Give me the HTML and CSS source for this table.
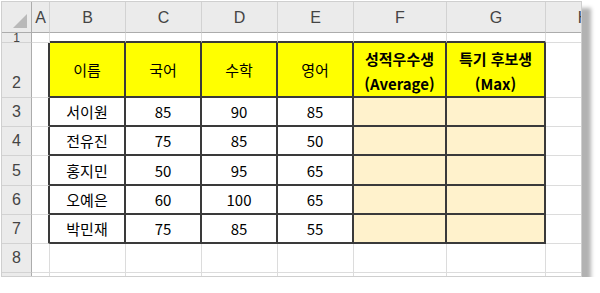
FILE: index.html
```html
<!DOCTYPE html>
<html lang="ko">
<head>
<meta charset="utf-8">
<title>Sheet</title>
<link rel="stylesheet" href="styles.css">
</head>
<body>
<div class="frame">
  <div class="sheet">
    <div class="c corner"><span class="tri"></span></div>
    <div class="c ch">A</div>
    <div class="c ch">B</div>
    <div class="c ch">C</div>
    <div class="c ch">D</div>
    <div class="c ch">E</div>
    <div class="c ch">F</div>
    <div class="c ch">G</div>
    <div class="c ch">H</div>

    <div class="c rh r1">1</div>
    <div class="c"></div>
    <div class="c tt"></div><div class="c tt"></div><div class="c tt"></div><div class="c tt"></div><div class="c tt"></div><div class="c tt"></div>
    <div class="c"></div>

    <div class="c rh">2</div>
    <div class="c tl"></div>
    <div class="c t y">이름</div>
    <div class="c t y">국어</div>
    <div class="c t y">수학</div>
    <div class="c t y">영어</div>
    <div class="c t y b">성적우수생<br>(Average)</div>
    <div class="c t y b">특기 후보생<br>(Max)</div>
    <div class="c"></div>

    <div class="c rh">3</div>
    <div class="c tl"></div>
    <div class="c t">서이원</div><div class="c t">85</div><div class="c t">90</div><div class="c t">85</div>
    <div class="c t p"></div><div class="c t p"></div>
    <div class="c"></div>

    <div class="c rh">4</div>
    <div class="c tl"></div>
    <div class="c t">전유진</div><div class="c t">75</div><div class="c t">85</div><div class="c t">50</div>
    <div class="c t p"></div><div class="c t p"></div>
    <div class="c"></div>

    <div class="c rh">5</div>
    <div class="c tl"></div>
    <div class="c t">홍지민</div><div class="c t">50</div><div class="c t">95</div><div class="c t">65</div>
    <div class="c t p"></div><div class="c t p"></div>
    <div class="c"></div>

    <div class="c rh">6</div>
    <div class="c tl"></div>
    <div class="c t">오예은</div><div class="c t">60</div><div class="c t">100</div><div class="c t">65</div>
    <div class="c t p"></div><div class="c t p"></div>
    <div class="c"></div>

    <div class="c rh">7</div>
    <div class="c tl"></div>
    <div class="c t">박민재</div><div class="c t">75</div><div class="c t">85</div><div class="c t">55</div>
    <div class="c t p"></div><div class="c t p"></div>
    <div class="c"></div>

    <div class="c rh">8</div>
    <div class="c"></div><div class="c"></div><div class="c"></div><div class="c"></div><div class="c"></div><div class="c"></div><div class="c"></div><div class="c"></div>

    <div class="c rh"></div>
    <div class="c"></div><div class="c"></div><div class="c"></div><div class="c"></div><div class="c"></div><div class="c"></div><div class="c"></div><div class="c"></div>
  </div>
</div>
</body>
</html>
```
FILE: styles.css
```css
html, body {
  margin: 0;
  padding: 0;
  background: #ffffff;
}

body {
  font-family: "Noto Sans CJK KR", "Noto Sans", sans-serif;
}

.frame {
  margin: 1px 0 0 1px;
  width: 581px;
  height: 276px;
  box-sizing: border-box;
  border: 1px solid #cfcfcf;
  overflow: hidden;
  background: #ffffff;
  box-shadow: 8px 8px 4px 1px #b2b2b2;
}

.sheet {
  display: grid;
  grid-template-columns: 30px 18px 76px 76px 76px 76px 93px 99px 76px;
  grid-template-rows: 31px 10px 55px 29px 29px 30px 29px 29px 29px 20px;
  width: max-content;
}

.c {
  box-sizing: border-box;
  border-right: 1px solid #dcdcdc;
  border-bottom: 1px solid #dcdcdc;
  display: flex;
  align-items: center;
  justify-content: center;
  font-size: 15px;
  color: #111111;
  overflow: hidden;
  white-space: nowrap;
}

.ch, .rh, .corner {
  background: #ebebeb;
  color: #444444;
  font-family: "Liberation Sans", "Noto Sans", sans-serif;
  font-size: 16px;
}

.ch {
  border-right: 1px solid #d2d2d2;
  border-bottom: 1px solid #acacac;
  padding-top: 2px;
}

.corner {
  border-right: 1px solid #acacac;
  border-bottom: 1px solid #acacac;
  align-items: flex-end;
  justify-content: flex-end;
  padding: 0 4px 4px 0;
}

.tri {
  width: 0;
  height: 0;
  border-left: 14px solid transparent;
  border-bottom: 14px solid #b9b9b9;
}

.rh {
  border-right: 1px solid #acacac;
  border-bottom: 1px solid #d2d2d2;
  align-items: flex-end;
  padding-bottom: 5px;
}

.r1 {
  align-items: flex-start;
  padding: 0;
  line-height: 10px;
  font-size: 12px;
}

.tt {
  border-bottom: 2px solid #3a3a3a;
}

.tl {
  border-right: 2px solid #3a3a3a;
}

.t {
  border-right: 2px solid #3a3a3a;
  border-bottom: 2px solid #3a3a3a;
  color: #000000;
}

.y {
  background: #ffff00;
}

.p {
  background: #fff2cc;
}

.b {
  font-weight: bold;
  flex-direction: column;
  line-height: 25px;
  text-align: center;
  padding-top: 2px;
}
```
